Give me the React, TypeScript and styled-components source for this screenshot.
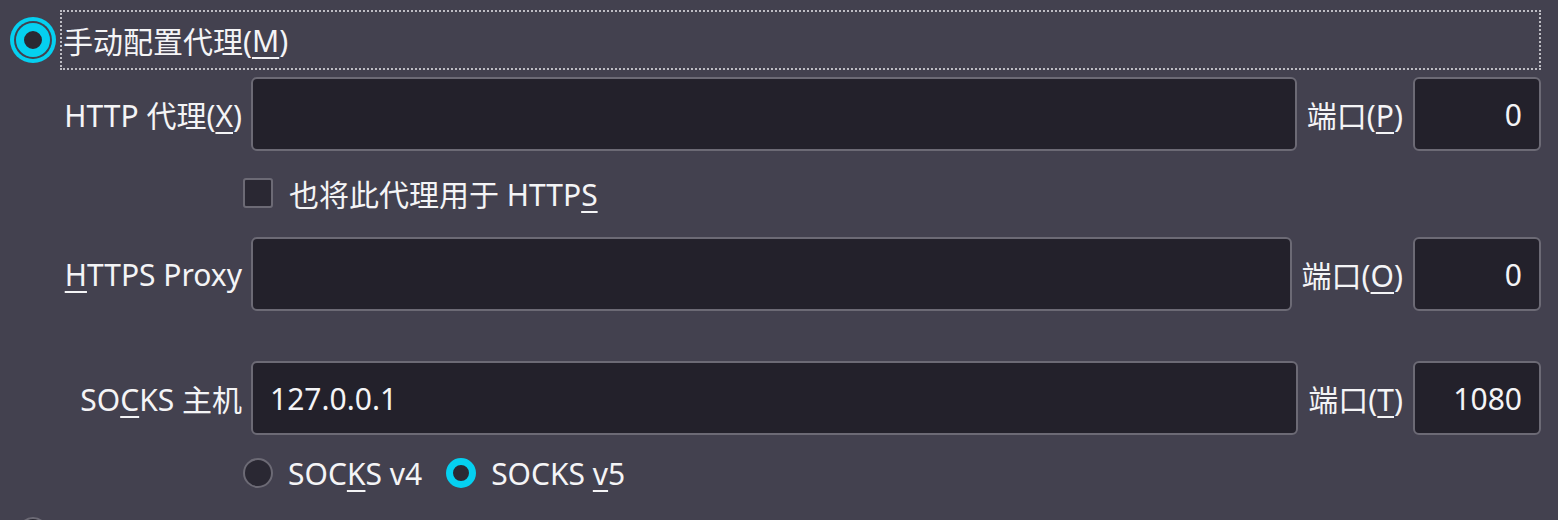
import React from "react";
import styled, { createGlobalStyle } from "styled-components";

const GlobalStyle = createGlobalStyle`
  html, body {
    margin: 0;
    padding: 0;
    background: #43414f;
  }
  body {
    font-family: "Noto Sans", "Noto Sans CJK SC", sans-serif;
    font-size: 30px;
    color: #f4f4f6;
  }
  u {
    text-decoration-thickness: 2px;
    text-underline-offset: 5px;
  }
`;

const Page = styled.div`
  height: 520px;
  overflow: hidden;
  box-sizing: border-box;
  padding: 10px 17px 0 10px;
  display: flex;
  flex-direction: column;
`;

const TopRow = styled.div`
  display: flex;
  align-items: center;
  height: 60px;
`;

const RadioDot = styled.span<{ $checked?: boolean; $focus?: boolean; $size?: number }>`
  flex: none;
  box-sizing: border-box;
  width: ${(p) => p.$size ?? 30}px;
  height: ${(p) => p.$size ?? 30}px;
  border-radius: 50%;
  background: #2a2833;
  border: ${(p) => (p.$checked ? `${Math.round((p.$size ?? 30) / 4.1)}px solid #05d0f0` : "2px solid #6c6a75")};
  ${(p) => (p.$focus ? "box-shadow: 0 0 0 2px #43414f, 0 0 0 6px #05d0f0; margin: 0 6px;" : "")}
`;

const FocusLabel = styled.label`
  flex: 1;
  box-sizing: border-box;
  height: 60px;
  margin-left: 4px;
  padding-left: 1px;
  display: flex;
  align-items: center;
  border: 2px dotted #bdbcc3;
`;

const FieldRow = styled.div<{ $mt: number }>`
  display: flex;
  align-items: center;
  margin-top: ${(p) => p.$mt}px;
`;

const FieldLabel = styled.label`
  flex: none;
  width: 232px;
  margin-right: 9px;
  text-align: right;
  white-space: nowrap;
`;

const TextInput = styled.div<{ $align?: "left" | "right" }>`
  box-sizing: border-box;
  height: 74px;
  border: 2px solid #6c6a75;
  border-radius: 6px;
  background: #23212b;
  display: flex;
  align-items: center;
  justify-content: ${(p) => (p.$align === "right" ? "flex-end" : "flex-start")};
  padding: 0 17px;
  white-space: nowrap;
`;

const MainInput = styled(TextInput)`
  flex: 1;
`;

const PortInput = styled(TextInput)`
  flex: none;
  width: 128px;
`;

const PortLabel = styled.label`
  flex: none;
  margin: 0 10px;
  white-space: nowrap;
`;

const OptionRow = styled.div<{ $mt: number; $ml: number }>`
  display: flex;
  align-items: center;
  height: 30px;
  margin-top: ${(p) => p.$mt}px;
  margin-left: ${(p) => p.$ml}px;
`;

const CheckBox = styled.span`
  flex: none;
  box-sizing: border-box;
  width: 30px;
  height: 30px;
  border-radius: 3px;
  border: 2px solid #6c6a75;
  background: #2a2833;
`;

const Option = styled.label<{ $gap: number; $after?: number }>`
  display: flex;
  align-items: center;
  gap: ${(p) => p.$gap}px;
  margin-right: ${(p) => p.$after ?? 0}px;
  white-space: nowrap;
`;

export default function App() {
  return (
    <>
      <GlobalStyle />
      <Page>
        <TopRow>
          <RadioDot $checked $focus $size={34} />
          <FocusLabel>
            手动配置代理(<u>M</u>)
          </FocusLabel>
        </TopRow>

        <FieldRow $mt={7}>
          <FieldLabel>
            HTTP 代理(<u>X</u>)
          </FieldLabel>
          <MainInput />
          <PortLabel>
            端口(<u>P</u>)
          </PortLabel>
          <PortInput $align="right">0</PortInput>
        </FieldRow>

        <OptionRow $mt={27} $ml={233}>
          <Option $gap={16}>
            <CheckBox />
            <span>
              也将此代理用于 HTTP<u>S</u>
            </span>
          </Option>
        </OptionRow>

        <FieldRow $mt={29}>
          <FieldLabel>
            <u>H</u>TTPS Proxy
          </FieldLabel>
          <MainInput />
          <PortLabel>
            端口(<u>O</u>)
          </PortLabel>
          <PortInput $align="right">0</PortInput>
        </FieldRow>

        <FieldRow $mt={50}>
          <FieldLabel>
            SO<u>C</u>KS 主机
          </FieldLabel>
          <MainInput>127.0.0.1</MainInput>
          <PortLabel>
            端口(<u>T</u>)
          </PortLabel>
          <PortInput $align="right">1080</PortInput>
        </FieldRow>

        <OptionRow $mt={23} $ml={233}>
          <Option $gap={15} $after={24}>
            <RadioDot />
            <span>
              SOC<u>K</u>S v4
            </span>
          </Option>
          <Option $gap={15}>
            <RadioDot $checked />
            <span>
              SOCKS <u>v</u>5
            </span>
          </Option>
        </OptionRow>

        <OptionRow $mt={29} $ml={8}>
          <RadioDot />
        </OptionRow>
      </Page>
    </>
  );
}
